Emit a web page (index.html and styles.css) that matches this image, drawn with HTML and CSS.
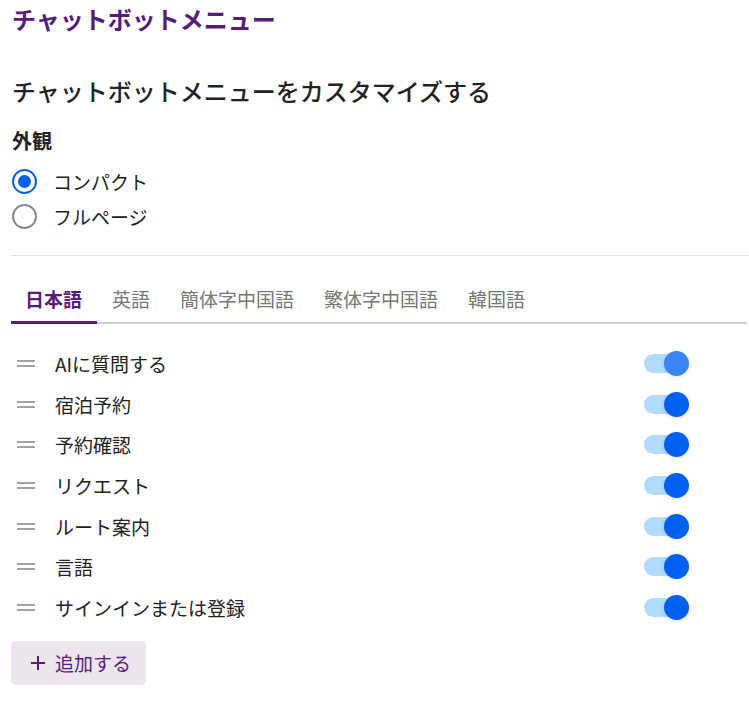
FILE: index.html
```html
<!DOCTYPE html>
<html lang="ja">
  <head>
    <meta charset="UTF-8" />
    <meta name="viewport" content="width=device-width, initial-scale=1.0" />
    <title>チャットボットメニュー</title>
    <link rel="stylesheet" href="styles.css">
  </head>
  <body>
    <div class="page">
      <h1 class="title">チャットボットメニュー</h1>
      <h2 class="subtitle">チャットボットメニューをカスタマイズする</h2>

      <!-- 外観 -->
      <div class="section-label">外観</div>
      <label class="radio">
        <input type="radio" name="look" checked />
        <span class="dot"></span>
        <span>コンパクト</span>
      </label>
      <label class="radio">
        <input type="radio" name="look" />
        <span class="dot"></span>
        <span>フルページ</span>
      </label>

      <div class="divider"></div>

      <!-- 言語タブ -->
      <div class="tabs">
        <div class="tab active">日本語</div>
        <div class="tab">英語</div>
        <div class="tab">簡体字中国語</div>
        <div class="tab">繁体字中国語</div>
        <div class="tab">韓国語</div>
      </div>

      <!-- メニュー項目 -->
      <ul class="menu-list">
        <li class="menu-item">
          <span class="handle"></span>
          <span class="label">AIに質問する</span>
          <span class="switch hover"><span class="knob"></span></span>
        </li>
        <li class="menu-item">
          <span class="handle"></span>
          <span class="label">宿泊予約</span>
          <span class="switch"><span class="knob"></span></span>
        </li>
        <li class="menu-item">
          <span class="handle"></span>
          <span class="label">予約確認</span>
          <span class="switch"><span class="knob"></span></span>
        </li>
        <li class="menu-item">
          <span class="handle"></span>
          <span class="label">リクエスト</span>
          <span class="switch"><span class="knob"></span></span>
        </li>
        <li class="menu-item">
          <span class="handle"></span>
          <span class="label">ルート案内</span>
          <span class="switch"><span class="knob"></span></span>
        </li>
        <li class="menu-item">
          <span class="handle"></span>
          <span class="label">言語</span>
          <span class="switch"><span class="knob"></span></span>
        </li>
        <li class="menu-item">
          <span class="handle"></span>
          <span class="label">サインインまたは登録</span>
          <span class="switch"><span class="knob"></span></span>
        </li>
      </ul>

      <button class="add-btn">
        <svg width="14" height="14" viewBox="0 0 14 14">
          <path d="M7 0v14M0 7h14" stroke="currentColor" stroke-width="2" fill="none" />
        </svg>
        <span>追加する</span>
      </button>
    </div>
  </body>
</html>
```

FILE: styles.css
```css
body{
  margin: 0;
  font-family: "Noto Sans CJK JP", "Noto Sans", sans-serif;
  color: #222;
  background: #fff;
}
.page{
  padding-left: 11px;
}
/* 見出し */
.title{
  margin: 0;
  height: 38px;
  line-height: 38px;
  font-size: 24px;
  font-weight: 700;
  color: #581c7c;
  padding-left: 1px;
}
.subtitle{
  margin: 35px 0 0;
  height: 36px;
  line-height: 36px;
  font-size: 24px;
  font-weight: 500;
  padding-left: 1px;
}
.section-label{
  margin-top: 17px;
  height: 30px;
  line-height: 30px;
  font-size: 20px;
  font-weight: 700;
  padding-left: 1px;
}
/* ラジオボタン */
.radio{
  display: flex;
  align-items: center;
  gap: 16px;
  height: 35px;
  font-size: 19px;
  padding-left: 1px;
}
.radio:first-of-type{
  margin-top: 8px;
}
.radio input{
  display: none;
}
.radio .dot{
  width: 21px;
  height: 21px;
  border: 2px solid #888;
  border-radius: 50%;
  display: flex;
  align-items: center;
  justify-content: center;
}
.radio input:checked + .dot{
  border-color: #0a5fe8;
}
.radio input:checked + .dot::after{
  content: "";
  width: 13px;
  height: 13px;
  border-radius: 50%;
  background: #0a5fe8;
}
.divider{
  margin-top: 21px;
  height: 1px;
  background: #e3e3e3;
}
/* タブ */
.tabs{
  display: flex;
  margin-top: 20px;
  margin-right: 2px;
  border-bottom: 2px solid #cfcfcf;
}
.tab{
  position: relative;
  padding: 0 15px;
  height: 46px;
  line-height: 46px;
  font-size: 19px;
  color: #777;
}
.tab:first-child{
  padding-left: 14px;
}
.tab.active{
  color: #581c7c;
  font-weight: 700;
}
.tab.active::after{
  content: "";
  position: absolute;
  left: 0;
  right: 0;
  bottom: -2px;
  height: 3px;
  background: #581c7c;
}
/* メニュー一覧 */
.menu-list{
  list-style: none;
  margin: 19px 0 0;
  padding: 0;
}
.menu-item{
  display: flex;
  align-items: center;
  height: 40.7px;
  padding: 0 61px 0 6px;
  font-size: 19px;
}
.handle{
  width: 18px;
  height: 7px;
  border-top: 2px solid #a2a2a2;
  border-bottom: 2px solid #a2a2a2;
  box-sizing: border-box;
  margin-right: 20px;
}
.label{
  flex: 1;
}
.switch{
  position: relative;
  width: 44px;
  height: 19px;
  border-radius: 10px;
  background: #b1dbff;
}
.knob{
  position: absolute;
  right: -1px;
  top: -3px;
  width: 25px;
  height: 25px;
  border-radius: 50%;
  background: #0060ee;
  box-shadow: 0 1px 4px rgba(0, 0, 0, 0.12);
}
.switch.hover .knob{
  background: #3b84f4;
}
/* 追加ボタン */
.add-btn{
  margin-top: 13px;
  display: flex;
  align-items: center;
  gap: 10px;
  width: 135px;
  height: 44px;
  padding: 0 0 0 20px;
  border: none;
  border-radius: 5px;
  background: #ede6ef;
  color: #581c7c;
  font-family: inherit;
  font-size: 19px;
  cursor: pointer;
}
```
